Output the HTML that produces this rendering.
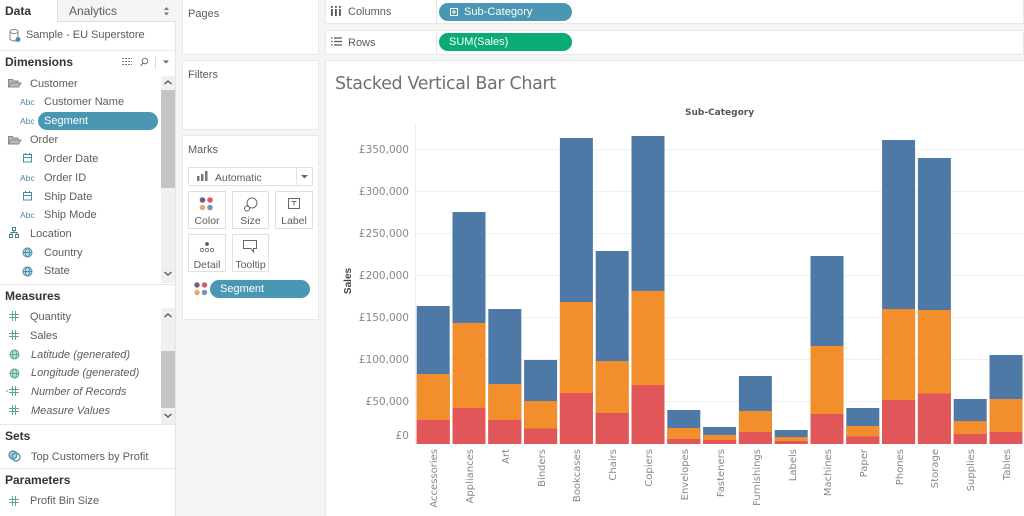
<!DOCTYPE html>
<html><head><meta charset="utf-8"><style>
html,body{margin:0;padding:0;background:#fff}
#p{position:relative;width:1024px;height:516px;overflow:hidden;background:#f5f5f5;font-family:"Liberation Sans",sans-serif;color:#5c5c5c;font-size:11px;filter:blur(.3px)}
#p div{position:absolute;box-sizing:border-box}
.t{white-space:nowrap;line-height:14px}
.h{font-weight:bold;color:#333;font-size:12px}
.box{background:#fff;border:1px solid #e8e8e8}
.pill{border-radius:10px;color:#fff;line-height:18px;white-space:nowrap}
.btn{background:#fff;border:1px solid #e0e0e0;text-align:center;line-height:13px;color:#5c5c5c;font-size:10.5px}
.i{font-style:italic}
.abc{color:#4a8ba5;font-size:8.5px;line-height:12px;white-space:nowrap}
.g{height:1px;background:#f0f0f0;left:416px;width:608px}
.y{width:68px;left:341px;text-align:right;font-family:"DejaVu Sans",sans-serif;font-size:10.5px;color:#888;line-height:12px}
.sb{background:#f0f0f0;width:14px;left:161px}
svg{position:absolute;overflow:visible}
</style></head><body><div id="p">

<div style="left:0;top:0;width:176px;height:516px;background:#fff;border-right:1px solid #e4e4e4"></div>
<div style="left:57px;top:0;width:119px;height:22px;background:#f5f5f5;border-left:1px solid #ddd;border-bottom:1px solid #ddd"></div>
<div class="t h" style="left:5px;top:4px">Data</div>
<div class="t" style="left:69px;top:4px;font-size:12px">Analytics</div>
<svg style="left:164px;top:7px" width="6" height="9" fill="#777"><path d="M0 3L2.500 0 5 3zM0 5.500L2.500 8.500 5 5.500z"/></svg>
<svg style="left:8px;top:28px" width="14" height="16" fill="none" stroke="#888"><ellipse cx="6" cy="3.5" rx="4" ry="2"/><path d="M2 3.5V11.5Q6 14 9 12.5M10 3.5V9"/><circle cx="10" cy="11.5" r="2.5" fill="#4a8ba5" stroke="none"/></svg>
<div class="t" style="left:26px;top:28px;font-size:11px;letter-spacing:-.03px">Sample - EU Superstore</div>
<div style="left:0;top:50px;width:176px;height:1px;background:#ececec"></div>

<div class="t h" style="left:5px;top:55px">Dimensions</div>
<svg style="left:122px;top:57px" width="50" height="12" fill="none" stroke="#777"><path d="M0 1.500H10M0 4.500H10M0 7.500H10" stroke-dasharray="2 1"/><circle cx="23" cy="4" r="2.800"/><path d="M21 6L18.500 9"/><path d="M33.500 0V12" stroke="#ddd"/><path d="M41 3.500h6l-3 3z" fill="#666" stroke="none"/></svg>

<div class="sb" style="top:76px;height:207px"></div>
<div style="left:161px;top:90px;width:14px;height:98px;background:#c4c4c4"></div>
<svg style="left:163px;top:78px" width="10" height="200" fill="none" stroke="#555" stroke-width="1.300"><path d="M1.500 6L5 3l3.500 3M1.500 194L5 197l3.500-3"/></svg>

<svg style="left:8px;top:78px" width="14" height="10" fill="none" stroke="#888"><path d="M.5 9V1.500h4l1 1.500h4.500v2M.5 9L3 5H13L10.500 9z" fill="#bbb"/></svg>
<div class="t" style="left:30px;top:77px">Customer</div>
<div class="abc" style="left:20px;top:96px">Abc</div>
<div class="t" style="left:44px;top:95px">Customer Name</div>
<div class="abc" style="left:20px;top:115px">Abc</div>
<div class="pill" style="left:38px;top:112px;width:120px;height:18px;background:#4a97b4;padding-left:6px;font-size:11px">Segment</div>
<svg style="left:8px;top:135px" width="14" height="10" fill="none" stroke="#888"><path d="M.5 9V1.500h4l1 1.500h4.500v2M.5 9L3 5H13L10.500 9z" fill="#bbb"/></svg>
<div class="t" style="left:30px;top:133px">Order</div>
<svg style="left:23px;top:153px" width="10" height="10" fill="none" stroke="#4a8ba5"><rect x=".5" y="1.500" width="8" height="7.500"/><path d="M.5 4.500h8M2.500 0v2M6.500 0v2"/></svg>
<div class="t" style="left:44px;top:152px">Order Date</div>
<div class="abc" style="left:20px;top:172px">Abc</div>
<div class="t" style="left:44px;top:171px">Order ID</div>
<svg style="left:23px;top:191px" width="10" height="10" fill="none" stroke="#4a8ba5"><rect x=".5" y="1.500" width="8" height="7.500"/><path d="M.5 4.500h8M2.500 0v2M6.500 0v2"/></svg>
<div class="t" style="left:44px;top:190px">Ship Date</div>
<div class="abc" style="left:20px;top:209px">Abc</div>
<div class="t" style="left:44px;top:208px">Ship Mode</div>
<svg style="left:9px;top:227px" width="11" height="11" fill="none" stroke="#4a7c96"><rect x="3.500" y=".5" width="3" height="3"/><rect x=".5" y="7.500" width="3" height="3"/><rect x="6.500" y="7.500" width="3" height="3"/><path d="M5 3.500V5.500M2 7.500V5.500H8V7.500"/></svg>
<div class="t" style="left:30px;top:227px">Location</div>
<svg style="left:22px;top:247px" width="11" height="11" fill="none" stroke="#4a8ba5"><circle cx="5.500" cy="5.500" r="4.500" fill="#bcdbe5"/><ellipse cx="5.500" cy="5.500" rx="2" ry="4.500"/><path d="M1 5.500h9"/></svg>
<div class="t" style="left:44px;top:246px">Country</div>
<svg style="left:22px;top:266px" width="11" height="11" fill="none" stroke="#4a8ba5"><circle cx="5.500" cy="5.500" r="4.500" fill="#bcdbe5"/><ellipse cx="5.500" cy="5.500" rx="2" ry="4.500"/><path d="M1 5.500h9"/></svg>
<div class="t" style="left:44px;top:264px">State</div>

<div style="left:0;top:284px;width:176px;height:1px;background:#e8e8e8"></div>
<div class="t h" style="left:5px;top:289px">Measures</div>
<div class="sb" style="top:308px;height:117px"></div>
<div style="left:161px;top:351px;width:14px;height:57px;background:#c4c4c4"></div>
<svg style="left:163px;top:310px" width="10" height="112" fill="none" stroke="#555" stroke-width="1.300"><path d="M1.500 7L5 4l3.500 3M1.500 104L5 107l3.500-3"/></svg>

<svg style="left:9px;top:311px" width="10" height="10" fill="none" stroke="#5aa88e"><path d="M3.500 0V10M6.500 0V10M0 3.500H10M0 6.500H10"/></svg>
<div class="t" style="left:30px;top:310px">Quantity</div>
<svg style="left:9px;top:330px" width="10" height="10" fill="none" stroke="#5aa88e"><path d="M3.500 0V10M6.500 0V10M0 3.500H10M0 6.500H10"/></svg>
<div class="t" style="left:30px;top:329px">Sales</div>
<svg style="left:9px;top:349px" width="11" height="11" fill="none" stroke="#5aa88e"><circle cx="5.500" cy="5.500" r="4.500" fill="#c6e4d9"/><ellipse cx="5.500" cy="5.500" rx="2" ry="4.500"/><path d="M1 5.500h9"/></svg>
<div class="t i" style="left:31px;top:348px">Latitude (generated)</div>
<svg style="left:9px;top:368px" width="11" height="11" fill="none" stroke="#5aa88e"><circle cx="5.500" cy="5.500" r="4.500" fill="#c6e4d9"/><ellipse cx="5.500" cy="5.500" rx="2" ry="4.500"/><path d="M1 5.500h9"/></svg>
<div class="t i" style="left:31px;top:366px">Longitude (generated)</div>
<svg style="left:6px;top:386px" width="13" height="10" fill="none" stroke="#5aa88e"><path d="M6.500 0V10M9.500 0V10M3 3.500H13M3 6.500H13M0 5H2"/></svg>
<div class="t i" style="left:31px;top:385px">Number of Records</div>
<svg style="left:9px;top:405px" width="10" height="10" fill="none" stroke="#5aa88e"><path d="M3.500 0V10M6.500 0V10M0 3.500H10M0 6.500H10"/></svg>
<div class="t i" style="left:31px;top:404px">Measure Values</div>

<div style="left:0;top:424px;width:176px;height:1px;background:#e8e8e8"></div>
<div class="t h" style="left:5px;top:429px">Sets</div>
<svg style="left:8px;top:450px" width="13" height="12" fill="none" stroke="#4a8ba5" stroke-width="1.200"><circle cx="5" cy="5" r="4" fill="#a9cddb"/><circle cx="8" cy="7" r="4"/></svg>
<div class="t" style="left:31px;top:450px">Top Customers by Profit</div>
<div style="left:0;top:468px;width:176px;height:1px;background:#e8e8e8"></div>
<div class="t h" style="left:5px;top:473px">Parameters</div>
<svg style="left:9px;top:496px" width="10" height="10" fill="none" stroke="#5aa88e"><path d="M3.500 0V10M6.500 0V10M0 3.500H10M0 6.500H10"/></svg>
<div class="t" style="left:30px;top:494px">Profit Bin Size</div>

<div class="box" style="left:182px;top:-1px;width:137px;height:56px"></div>
<div class="t" style="left:188px;top:7px">Pages</div>
<div class="box" style="left:182px;top:60px;width:137px;height:70px"></div>
<div class="t" style="left:188px;top:68px">Filters</div>

<div class="box" style="left:182px;top:135px;width:137px;height:185px"></div>
<div class="t" style="left:188px;top:143px">Marks</div>
<div class="btn" style="left:188px;top:167px;width:125px;height:19px"></div>
<div style="left:296px;top:168px;width:1px;height:17px;background:#e4e4e4"></div>
<svg style="left:197px;top:171px" width="12" height="11" fill="#777"><rect x="0" y="5" width="2.500" height="5"/><rect x="4" y="3" width="2.500" height="7"/><rect x="8" y="0" width="2.500" height="10"/></svg>
<div class="t" style="left:215px;top:171px;font-size:10.500px">Automatic</div>
<svg style="left:301px;top:175px" width="8" height="4"><path d="M0 0h7l-3.500 3.500z" fill="#666"/></svg>

<div class="btn" style="left:188px;top:191px;width:38px;height:38px;padding-top:23px">Color</div>
<svg style="left:199px;top:197px" width="15" height="15"><circle cx="3.500" cy="3" r="2.800" fill="#6a5f8f"/><circle cx="11" cy="3" r="2.800" fill="#dc5b5f"/><circle cx="3.500" cy="10.500" r="2.800" fill="#eda66c"/><circle cx="11" cy="10.500" r="2.800" fill="#6f95bd"/></svg>
<div class="btn" style="left:232px;top:191px;width:37px;height:38px;padding-top:23px">Size</div>
<svg style="left:244px;top:197px" width="14" height="15" fill="none" stroke="#666"><circle cx="8" cy="6" r="5"/><circle cx="3" cy="11.500" r="2.500" fill="#fff"/></svg>
<div class="btn" style="left:275px;top:191px;width:38px;height:38px;padding-top:23px">Label</div>
<svg style="left:288px;top:198px" width="12" height="11" fill="none" stroke="#666"><rect x=".5" y=".5" width="11" height="10"/><path d="M3.500 3.500h5M6 3.500v4"/></svg>
<div class="btn" style="left:188px;top:234px;width:38px;height:38px;padding-top:24px">Detail</div>
<svg style="left:200px;top:242px" width="14" height="12" fill="none" stroke="#666" stroke-width=".8"><circle cx="7" cy="2" r="1.500" fill="#555"/><circle cx="2" cy="8" r="1.700"/><circle cx="7" cy="8" r="1.700"/><circle cx="12" cy="8" r="1.700"/></svg>
<div class="btn" style="left:232px;top:234px;width:37px;height:38px;padding-top:24px">Tooltip</div>
<svg style="left:243px;top:240px" width="15" height="14" fill="none" stroke="#666"><path d="M.5.500h13v8H10.500V12L8 8.500H.5z"/></svg>
<svg style="left:194px;top:282px" width="14" height="14"><circle cx="3" cy="3" r="2.700" fill="#6a5f8f"/><circle cx="10.500" cy="3" r="2.700" fill="#dc5b5f"/><circle cx="3" cy="10.500" r="2.700" fill="#eda66c"/><circle cx="10.500" cy="10.500" r="2.700" fill="#6f95bd"/></svg>
<div class="pill" style="left:210px;top:280px;width:100px;height:18px;background:#4a97b4;padding-left:10px;font-size:11px">Segment</div>

<div class="box" style="left:325px;top:-1px;width:699px;height:25px"></div>
<div style="left:436px;top:0;width:1px;height:23px;background:#e4e4e4"></div>
<svg style="left:331px;top:6px" width="11" height="10" fill="#555"><rect x="0" y="3" width="1.800" height="7"/><rect x="4" y="3" width="1.800" height="7"/><rect x="8" y="3" width="1.800" height="7"/><rect x="0" y="0" width="1.800" height="1.800"/><rect x="4" y="0" width="1.800" height="1.800"/><rect x="8" y="0" width="1.800" height="1.800"/></svg>
<div class="t" style="left:348px;top:5px">Columns</div>
<div class="pill" style="left:439px;top:3px;width:133px;height:18px;background:#4a97b4;padding-left:25px;font-size:11px;line-height:19px;letter-spacing:.05px">Sub-Category</div>
<svg style="left:450px;top:8px" width="9" height="9" fill="none" stroke="#fff"><rect x=".5" y=".5" width="7" height="7"/><path d="M2 4h4M4 2v4"/></svg>

<div class="box" style="left:325px;top:30px;width:699px;height:25px"></div>
<div style="left:436px;top:31px;width:1px;height:23px;background:#e4e4e4"></div>
<svg style="left:331px;top:37px" width="11" height="9" fill="none" stroke="#555" stroke-width="1.300"><path d="M3 1H11M3 4.500H11M3 8H11M0 1H1.500M0 4.500H1.500M0 8H1.500"/></svg>
<div class="t" style="left:348px;top:36px">Rows</div>
<div class="pill" style="left:439px;top:33px;width:133px;height:18px;background:#0bab78;padding-left:10px;font-size:11px;line-height:19px">SUM(Sales)</div>

<div style="left:325px;top:60px;width:699px;height:456px;background:#fff;border-left:1px solid #e8e8e8;border-top:1px solid #e8e8e8"></div>
<div class="t" style="left:335px;top:73px;font-family:'DejaVu Sans',sans-serif;font-size:17.500px;line-height:22px;color:#707070;letter-spacing:-.02em">Stacked Vertical Bar Chart</div>
<div class="t" style="left:685px;top:106px;font-family:'DejaVu Sans',sans-serif;font-size:9px;font-weight:bold;color:#555">Sub-Category</div>
<div style="left:415px;top:124px;width:1px;height:320px;background:#eee"></div>
<svg style="left:0;top:0" width="1024" height="516"><text transform="translate(351,281) rotate(-90)" text-anchor="middle" font-family="Liberation Sans, sans-serif" font-size="10" font-weight="bold" fill="#444">Sales</text></svg>

<div class="g" style="top:149px"></div><div class="g" style="top:191px"></div><div class="g" style="top:233px"></div><div class="g" style="top:275px"></div><div class="g" style="top:317px"></div><div class="g" style="top:359px"></div><div class="g" style="top:401px"></div>
<div class="y" style="top:144px">£350,000</div>
<div class="y" style="top:186px">£300,000</div>
<div class="y" style="top:228px">£250,000</div>
<div class="y" style="top:270px">£200,000</div>
<div class="y" style="top:312px">£150,000</div>
<div class="y" style="top:354px">£100,000</div>
<div class="y" style="top:396px">£50,000</div>
<div class="y" style="top:430px">£0</div>

<svg style="left:0;top:0" width="1024" height="516">
<g fill="#4e79a7"><rect x="416.700" y="306" width="33" height="138"/><rect x="452.500" y="212" width="33" height="232"/><rect x="488.300" y="309" width="33" height="135"/><rect x="524.100" y="360" width="33" height="84"/><rect x="559.900" y="138" width="33" height="306"/><rect x="595.700" y="251" width="33" height="193"/><rect x="631.500" y="136" width="33" height="308"/><rect x="667.300" y="410" width="33" height="34"/><rect x="703.100" y="427" width="33" height="17"/><rect x="738.900" y="376" width="33" height="68"/><rect x="774.700" y="430" width="33" height="14"/><rect x="810.500" y="256" width="33" height="188"/><rect x="846.300" y="408" width="33" height="36"/><rect x="882.100" y="140" width="33" height="304"/><rect x="917.900" y="158" width="33" height="286"/><rect x="953.700" y="399" width="33" height="45"/><rect x="989.500" y="355" width="33" height="89"/></g>
<g fill="#f28e2b"><rect x="416.700" y="374" width="33" height="70"/><rect x="452.500" y="323" width="33" height="121"/><rect x="488.300" y="384" width="33" height="60"/><rect x="524.100" y="401" width="33" height="43"/><rect x="559.900" y="302" width="33" height="142"/><rect x="595.700" y="361" width="33" height="83"/><rect x="631.500" y="291" width="33" height="153"/><rect x="667.300" y="428" width="33" height="16"/><rect x="703.100" y="435" width="33" height="9"/><rect x="738.900" y="411" width="33" height="33"/><rect x="774.700" y="437" width="33" height="7"/><rect x="810.500" y="346" width="33" height="98"/><rect x="846.300" y="426" width="33" height="18"/><rect x="882.100" y="309" width="33" height="135"/><rect x="917.900" y="310" width="33" height="134"/><rect x="953.700" y="421" width="33" height="23"/><rect x="989.500" y="399" width="33" height="45"/></g>
<g fill="#e15759"><rect x="416.700" y="420" width="33" height="24"/><rect x="452.500" y="408" width="33" height="36"/><rect x="488.300" y="420" width="33" height="24"/><rect x="524.100" y="428.500" width="33" height="15.500"/><rect x="559.900" y="393" width="33" height="51"/><rect x="595.700" y="413" width="33" height="31"/><rect x="631.500" y="385" width="33" height="59"/><rect x="667.300" y="439" width="33" height="5"/><rect x="703.100" y="440" width="33" height="4"/><rect x="738.900" y="432" width="33" height="12"/><rect x="774.700" y="441" width="33" height="3"/><rect x="810.500" y="414" width="33" height="30"/><rect x="846.300" y="436.500" width="33" height="7.500"/><rect x="882.100" y="400" width="33" height="44"/><rect x="917.900" y="393.500" width="33" height="50.500"/><rect x="953.700" y="434" width="33" height="10"/><rect x="989.500" y="432" width="33" height="12"/></g>
<g font-family="DejaVu Sans, sans-serif" font-size="10" fill="#888" text-anchor="end">
<text transform="translate(437,449) rotate(-90)">Accessories</text>
<text transform="translate(473,449) rotate(-90)">Appliances</text>
<text transform="translate(509,449) rotate(-90)">Art</text>
<text transform="translate(545,449) rotate(-90)">Binders</text>
<text transform="translate(580,449) rotate(-90)">Bookcases</text>
<text transform="translate(616,449) rotate(-90)">Chairs</text>
<text transform="translate(652,449) rotate(-90)">Copiers</text>
<text transform="translate(688,449) rotate(-90)">Envelopes</text>
<text transform="translate(724,449) rotate(-90)">Fasteners</text>
<text transform="translate(760,449) rotate(-90)">Furnishings</text>
<text transform="translate(796,449) rotate(-90)">Labels</text>
<text transform="translate(831,449) rotate(-90)">Machines</text>
<text transform="translate(867,449) rotate(-90)">Paper</text>
<text transform="translate(903,449) rotate(-90)">Phones</text>
<text transform="translate(938,449) rotate(-90)">Storage</text>
<text transform="translate(974,449) rotate(-90)">Supplies</text>
<text transform="translate(1010,449) rotate(-90)">Tables</text>
</g>
</svg>
</div></body></html>
